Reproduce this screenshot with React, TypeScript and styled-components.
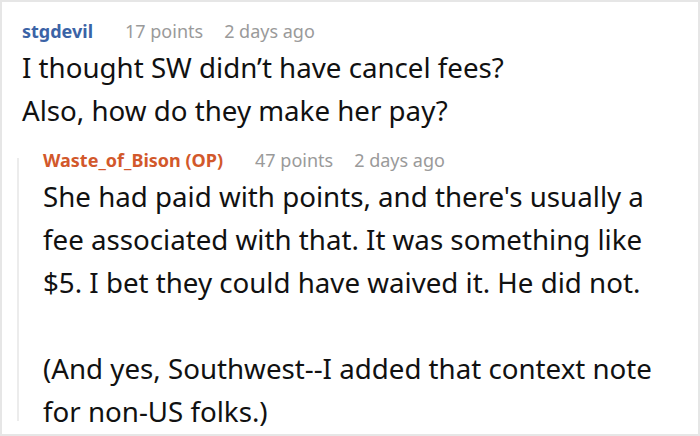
import * as React from 'react';
import styled, { createGlobalStyle } from 'styled-components';

const GlobalStyle = createGlobalStyle`
    html, body {
        margin: 0;
        padding: 0;
        background: #ffffff;
    }
    body {
        font-family: 'Noto Sans', 'Open Sans', sans-serif;
    }
`;

const Frame = styled.div`
    box-sizing: border-box;
    width: 700px;
    height: 436px;
    overflow: hidden;
    border: 2px solid #e6e6e6;
    padding: 19px 20px 0 20px;
`;

const Comment = styled.div`
    display: flex;
    flex-direction: column;
`;

const Meta = styled.div`
    display: flex;
    align-items: center;
    height: 20px;
    font-size: 18px;
    line-height: 20px;
    white-space: nowrap;
`;

const Author = styled.span<{ $op?: boolean }>`
    font-weight: 700;
    color: ${(p) => (p.$op ? '#d2582b' : '#3b63a6')};
    margin-right: 32px;
`;

const Points = styled.span`
    color: #9a9a9a;
    margin-right: 21px;
`;

const Age = styled.span`
    color: #9a9a9a;
`;

const Body = styled.div`
    margin-top: 5px;
    font-size: 27.7px;
    line-height: 43px;
    color: #111111;
    white-space: pre-line;
`;

const Reply = styled.div`
    position: relative;
    margin: 18px 0 0 -5px;
    padding-left: 26px;

    &::before {
        content: '';
        position: absolute;
        left: 0;
        top: 8px;
        bottom: 12px;
        width: 2px;
        background: #ececec;
    }
`;

const THREAD = {
    author: 'stgdevil',
    points: 17,
    age: '2 days ago',
    text: 'I thought SW didn\u2019t have cancel fees?\nAlso, how do they make her pay?',
    reply: {
        author: 'Waste_of_Bison (OP)',
        points: 47,
        age: '2 days ago',
        text: "She had paid with points, and there's usually a fee associated with that. It was something like $5. I bet they could have waived it. He did not.\n\n(And yes, Southwest--I added that context note for non-US folks.)",
    },
};

export default function App() {
    const r = THREAD.reply;
    return (
        <>
            <GlobalStyle />
            <Frame>
                <Comment>
                    <Meta>
                        <Author>{THREAD.author}</Author>
                        <Points>{THREAD.points} points</Points>
                        <Age>{THREAD.age}</Age>
                    </Meta>
                    <Body>{THREAD.text}</Body>
                    <Reply>
                        <Meta>
                            <Author $op>{r.author}</Author>
                            <Points>{r.points} points</Points>
                            <Age>{r.age}</Age>
                        </Meta>
                        <Body>{r.text}</Body>
                    </Reply>
                </Comment>
            </Frame>
        </>
    );
}
